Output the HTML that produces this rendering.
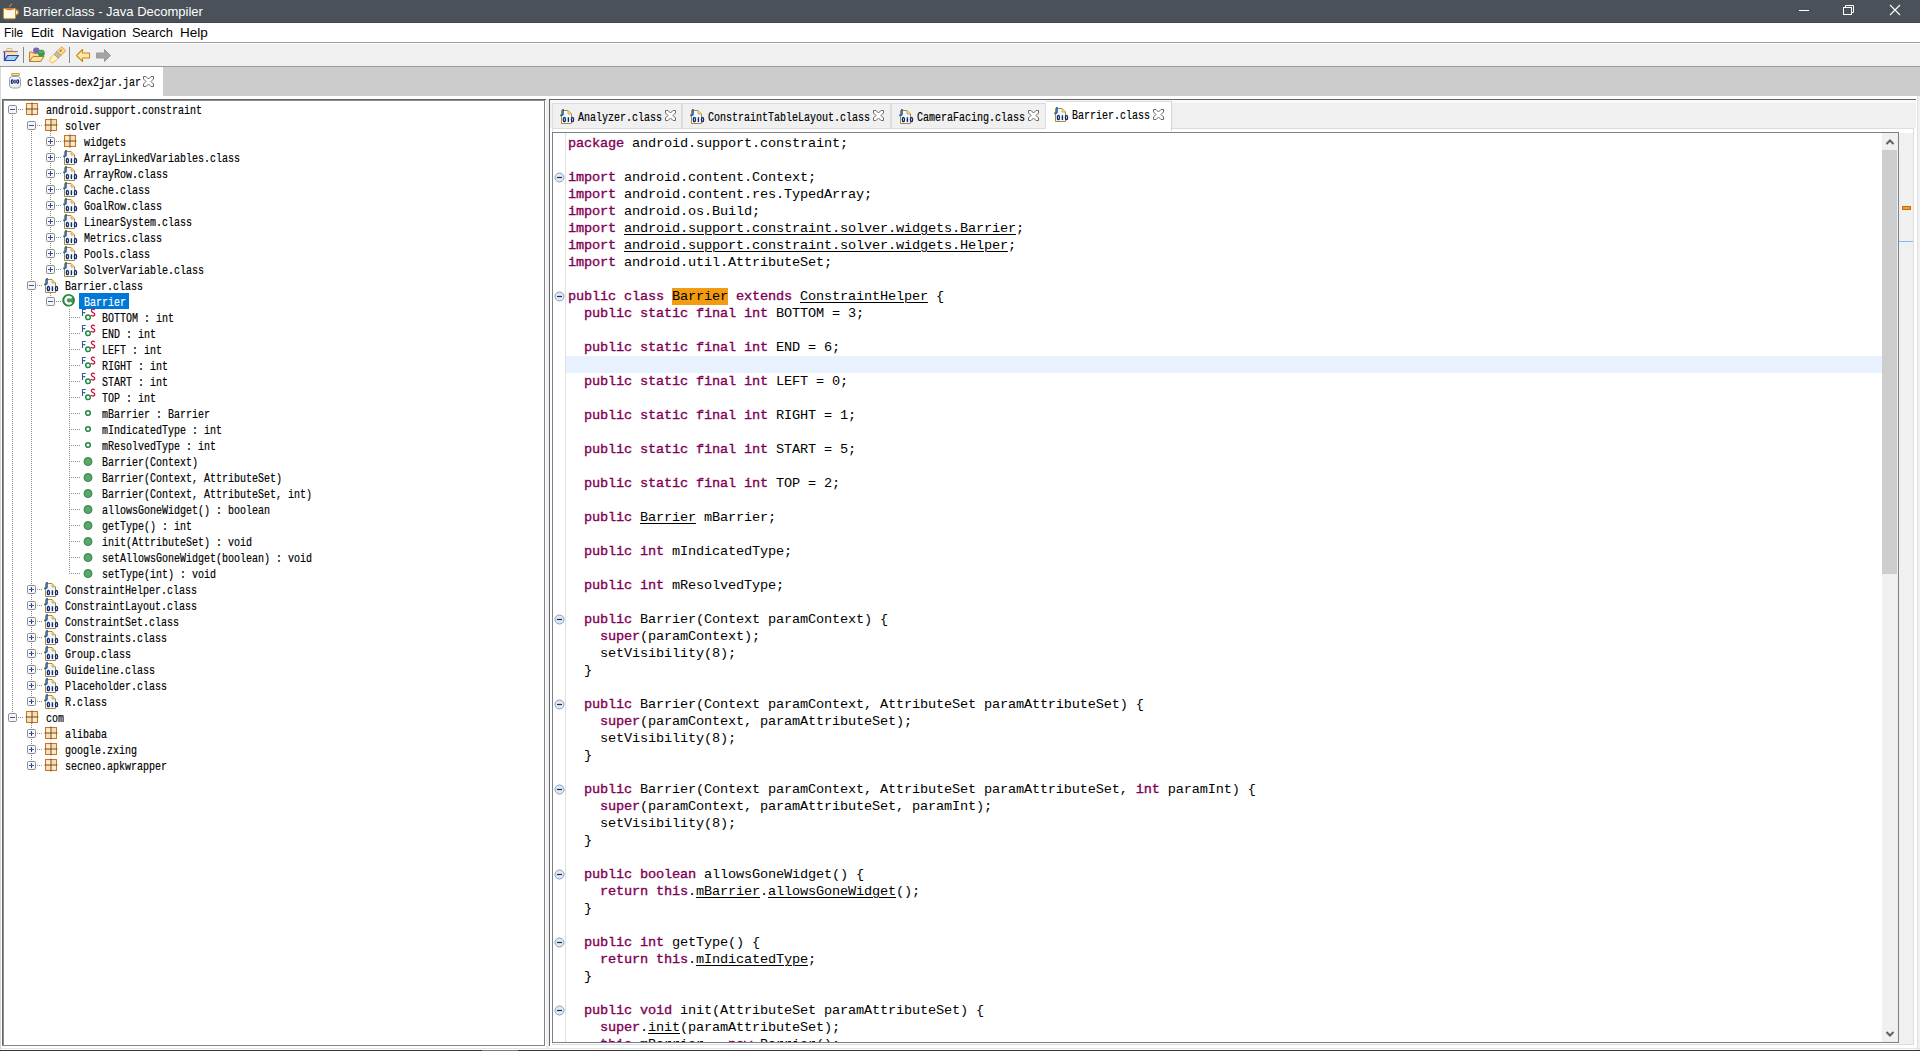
<!DOCTYPE html><html><head><meta charset="utf-8"><style>
html,body{margin:0;padding:0;}
body{width:1920px;height:1051px;overflow:hidden;background:#f0f0f0;position:relative;font-family:"Liberation Sans",sans-serif;}
.a{position:absolute;}
.tt{position:absolute;font-family:"Liberation Mono",monospace;font-size:10px;line-height:16px;white-space:pre;transform:scaleY(1.25);transform-origin:0 0;color:#000;-webkit-text-stroke:0.15px currentColor;}
.cd{position:absolute;left:568px;font-family:"Liberation Mono",monospace;font-size:13.6px;letter-spacing:-0.16px;line-height:17px;white-space:pre;color:#000;}
.k{color:#7f0055;-webkit-text-stroke:0.35px #7f0055;}
.u{text-decoration:underline;text-underline-offset:2px;text-decoration-thickness:1px;}
.hl{}
svg{position:absolute;overflow:visible;}
</style></head><body>
<div class="a" style="left:0;top:0;width:1920px;height:22px;background:#4a5158"></div>
<div class="a" style="left:0;top:22px;width:1920px;height:1px;background:#3f474e"></div>
<svg style="left:2px;top:2px" width="17" height="18" viewBox="0 0 17 18">
<path d="M10 1.8 Q8 3.5 7.5 5" stroke="#8a8a8a" stroke-width="1.3" fill="none"/>
<path d="M12.5 8 h1.6 a2 2.2 0 0 1 0 4.6 h-1.6" stroke="#d09030" stroke-width="1.3" fill="#fff4d8"/>
<path d="M1.5 6.5 L13.5 6.5 L13.5 15.5 Q13.5 16.8 12.2 16.8 L2.8 16.8 Q1.5 16.8 1.5 15.5 Z" fill="#fffbe6" stroke="#c88a2a" stroke-width="1"/>
<path d="M2.5 7 Q7.5 9.6 12.5 7 Z" fill="#f07030"/>
</svg>
<div class="a" style="left:23px;top:1px;height:22px;line-height:22px;font-size:13px;color:#fff">Barrier.class - Java Decompiler</div>
<svg style="left:0;top:0" width="1920" height="22"><line x1="1799" y1="10.5" x2="1809" y2="10.5" stroke="#fff" stroke-width="1"/><rect x="1843.5" y="7.5" width="8" height="7" fill="none" stroke="#fff" stroke-width="1"/><path d="M1845.5 7.5 V5.5 H1853.5 V12.5 H1851.5" fill="none" stroke="#fff" stroke-width="1"/><path d="M1890 5 L1900 15 M1900 5 L1890 15" stroke="#fff" stroke-width="1.1"/></svg>
<div class="a" style="left:0;top:23px;width:1920px;height:19px;background:#fff"></div>
<div class="a" style="left:0;top:43px;width:1920px;height:1px;background:#fcfcfc"></div>
<div class="a" style="left:4px;top:24px;line-height:18px;font-size:12.5px;color:#000;transform:scaleX(0.95);transform-origin:0 0">File</div>
<div class="a" style="left:31px;top:24px;line-height:18px;font-size:12.5px;color:#000;transform:scaleX(1.05);transform-origin:0 0">Edit</div>
<div class="a" style="left:62px;top:24px;line-height:18px;font-size:12.5px;color:#000;transform:scaleX(1.088);transform-origin:0 0">Navigation</div>
<div class="a" style="left:132px;top:24px;line-height:18px;font-size:12.5px;color:#000;transform:scaleX(1.03);transform-origin:0 0">Search</div>
<div class="a" style="left:180px;top:24px;line-height:18px;font-size:12.5px;color:#000;transform:scaleX(1.08);transform-origin:0 0">Help</div>
<div class="a" style="left:0;top:42px;width:1920px;height:1px;background:#a0a0a0"></div>
<div class="a" style="left:0;top:44px;width:1920px;height:22px;background:#f0f0f0"></div>
<div class="a" style="left:0;top:66px;width:1920px;height:1px;background:#999"></div>
<svg style="left:0px;top:43px" width="22" height="22" viewBox="0 0 22 22">
<rect x="6.5" y="5.5" width="5.5" height="2.5" rx="1" fill="#fff6dc" stroke="#d8b070" stroke-width="1"/>
<path d="M3.5 8.5 H17.5 V13 H4.5 Z" fill="#fde49a"/>
<path d="M3 8.5 H17.8" stroke="#8a7898" stroke-width="1.2"/>
<path d="M4.5 9 V17.5" stroke="#2848c0" stroke-width="1.3"/>
<path d="M7.5 12.5 H18.5 L14.8 17.5 H4.5 Z" fill="#a6d2f6" stroke="#2040c0" stroke-width="1.2" stroke-linejoin="round"/>
</svg>
<div class="a" style="left:23px;top:47px;width:1px;height:16px;background:#888"></div>
<svg style="left:28px;top:46px" width="18" height="17" viewBox="0 0 18 17">
<path d="M1.5 6 H4 L5 7 H13 V15.5 H1.5 Z" fill="#f9dc98" stroke="#c07a20" stroke-width="1"/>
<path d="M1.5 15.5 L5 10.5 H16 L12.5 15.5 Z" fill="#fbe3a0" stroke="#c07a20" stroke-width="1"/>
<circle cx="8.3" cy="4.6" r="3.2" fill="#7466b8"/>
<circle cx="13.4" cy="7.2" r="3.4" fill="#3a9a4a"/>
<path d="M11 6 H15.5" stroke="#8ac890" stroke-width="0.8"/>
</svg>
<svg style="left:48px;top:46px" width="18" height="18" viewBox="0 0 18 18">
<g transform="translate(8.8 9.6) rotate(-45) scale(0.88)">
<path d="M-10 -2.2 L-5 -3.2 H-1 V3.2 H-5 L-10 2.2 Z" fill="#fff4c0" stroke="#f0a830" stroke-width="0.9"/>
<path d="M-1 -3.2 H3.5 V3.2 H-1 Z" fill="#bdb8c4" stroke="#9a8a70" stroke-width="0.8"/>
<path d="M3.5 -3.2 H10 Q11.2 -3.2 11.2 -2 V2 Q11.2 3.2 10 3.2 H3.5 Z" fill="#fbd98a" stroke="#e8961c" stroke-width="1"/>
<circle cx="8" cy="-0.8" r="0.7" fill="#2a50a8"/><circle cx="6.5" cy="-0.8" r="0.7" fill="#2a50a8"/>
</g>
</svg>
<div class="a" style="left:69px;top:47px;width:1px;height:16px;background:#888"></div>
<svg style="left:75px;top:48px" width="17" height="15" viewBox="0 0 17 15">
<path d="M1.5 7.5 L7.5 1.5 V5 H14.5 V10 H7.5 V13.5 Z" fill="#fde9a8" stroke="#c88a10" stroke-width="1.1" stroke-linejoin="round"/>
</svg>
<svg style="left:95px;top:48px" width="17" height="15" viewBox="0 0 17 15">
<path d="M15.5 7.5 L9.5 1.5 V5 H1.5 V10 H9.5 V13.5 Z" fill="#a4a4a4" stroke="#999" stroke-width="1" stroke-linejoin="round"/>
</svg>
<div class="a" style="left:0;top:67px;width:1920px;height:29px;background:#cccccc"></div>
<div class="a" style="left:0;top:96px;width:1920px;height:954px;background:#fff"></div>
<div class="a" style="left:0;top:67px;width:1px;height:983px;background:#d9d9d9"></div>
<div class="a" style="left:1px;top:67px;width:162px;height:32px;background:#fff"></div>
<svg style="left:9px;top:73px" width="13" height="16" viewBox="0 0 13 16">
<rect x="2.5" y="0.5" width="8" height="2" rx="0.5" fill="#f6e4a0" stroke="#c8a040" stroke-width="1"/>
<rect x="0.5" y="3.5" width="11" height="11.5" rx="3" fill="#f4f7fc" stroke="#8aa2c8" stroke-width="1"/>
<rect x="2" y="12" width="8" height="2" fill="#fbeec0"/>
<ellipse cx="3.3" cy="8.6" rx="1" ry="1.8" fill="none" stroke="#13286a" stroke-width="1.2"/>
<path d="M6 6.8 V10.4" stroke="#13286a" stroke-width="1.3"/>
<ellipse cx="8.7" cy="8.6" rx="1" ry="1.8" fill="none" stroke="#13286a" stroke-width="1.2"/>
</svg>
<div class="tt" style="left:27px;top:73px">classes-dex2jar.jar</div>
<svg style="left:143px;top:76px" width="11" height="11" viewBox="0 0 11 11">
<path d="M0.5 0.5 H3 L5.5 3 L8 0.5 H10.5 V3 L8 5.5 L10.5 8 V10.5 H8 L5.5 8 L3 10.5 H0.5 V8 L3 5.5 L0.5 3 Z" fill="#fff" stroke="#6a6a5e" stroke-width="1" stroke-linejoin="round"/>
</svg>
<div class="a" style="left:2px;top:99px;width:543px;height:947px;background:#fff"></div>
<div class="a" style="left:2px;top:99px;width:544px;height:1px;background:#646464"></div>
<div class="a" style="left:2px;top:100px;width:542px;height:1px;background:#8a9199"></div>
<div class="a" style="left:2px;top:99px;width:1px;height:947px;background:#646464"></div>
<div class="a" style="left:3px;top:100px;width:1px;height:946px;background:#8a9199"></div>
<div class="a" style="left:544px;top:100px;width:1px;height:946px;background:#7a818a"></div>
<div class="a" style="left:2px;top:1045px;width:543px;height:1px;background:#80868e"></div>
<div class="a" style="left:12px;top:115px;width:1px;height:602px;background:repeating-linear-gradient(180deg,#8c8c8c 0 1px,transparent 1px 2px)"></div>
<div class="a" style="left:31px;top:131px;width:1px;height:571px;background:repeating-linear-gradient(180deg,#8c8c8c 0 1px,transparent 1px 2px)"></div>
<div class="a" style="left:31px;top:723px;width:1px;height:43px;background:repeating-linear-gradient(180deg,#8c8c8c 0 1px,transparent 1px 2px)"></div>
<div class="a" style="left:50px;top:131px;width:1px;height:139px;background:repeating-linear-gradient(180deg,#8c8c8c 0 1px,transparent 1px 2px)"></div>
<div class="a" style="left:50px;top:291px;width:1px;height:11px;background:repeating-linear-gradient(180deg,#8c8c8c 0 1px,transparent 1px 2px)"></div>
<div class="a" style="left:69px;top:309px;width:1px;height:265px;background:repeating-linear-gradient(180deg,#8c8c8c 0 1px,transparent 1px 2px)"></div>
<svg style="left:8px;top:105px" width="9" height="9" viewBox="0 0 9 9">
<rect x="0.5" y="0.5" width="8" height="8" rx="1.2" fill="#f6f6f6" stroke="#8e8e8e" stroke-width="1"/>
<path d="M2 4.5 H7" stroke="#3a56a8" stroke-width="1"/></svg>
<div class="a" style="left:18px;top:109px;width:6px;height:1px;background:repeating-linear-gradient(90deg,#8c8c8c 0 1px,transparent 1px 2px)"></div>
<svg style="left:25px;top:102px" width="14" height="14" viewBox="0 0 14 14">
<rect x="1.5" y="1.5" width="11" height="11" fill="#f7deb0" stroke="#c8742a" stroke-width="1"/>
<rect x="2.5" y="2.5" width="4" height="4" fill="#fcefc8"/><rect x="7.5" y="7.5" width="4" height="4" fill="#fcefc8"/>
<path d="M7 0.5 V13.5 M0.5 7 H13.5" stroke="#7a4a2a" stroke-width="1"/>
</svg>
<div class="tt" style="left:46px;top:101px">android.support.constraint</div>
<svg style="left:27px;top:121px" width="9" height="9" viewBox="0 0 9 9">
<rect x="0.5" y="0.5" width="8" height="8" rx="1.2" fill="#f6f6f6" stroke="#8e8e8e" stroke-width="1"/>
<path d="M2 4.5 H7" stroke="#3a56a8" stroke-width="1"/></svg>
<div class="a" style="left:37px;top:125px;width:6px;height:1px;background:repeating-linear-gradient(90deg,#8c8c8c 0 1px,transparent 1px 2px)"></div>
<svg style="left:44px;top:118px" width="14" height="14" viewBox="0 0 14 14">
<rect x="1.5" y="1.5" width="11" height="11" fill="#f7deb0" stroke="#c8742a" stroke-width="1"/>
<rect x="2.5" y="2.5" width="4" height="4" fill="#fcefc8"/><rect x="7.5" y="7.5" width="4" height="4" fill="#fcefc8"/>
<path d="M7 0.5 V13.5 M0.5 7 H13.5" stroke="#7a4a2a" stroke-width="1"/>
</svg>
<div class="tt" style="left:65px;top:117px">solver</div>
<svg style="left:46px;top:137px" width="9" height="9" viewBox="0 0 9 9">
<rect x="0.5" y="0.5" width="8" height="8" rx="1.2" fill="#f6f6f6" stroke="#8e8e8e" stroke-width="1"/>
<path d="M2 4.5 H7" stroke="#3a56a8" stroke-width="1"/><path d="M4.5 2 V7" stroke="#2a46a0" stroke-width="1"/></svg>
<div class="a" style="left:56px;top:141px;width:6px;height:1px;background:repeating-linear-gradient(90deg,#8c8c8c 0 1px,transparent 1px 2px)"></div>
<svg style="left:63px;top:134px" width="14" height="14" viewBox="0 0 14 14">
<rect x="1.5" y="1.5" width="11" height="11" fill="#f7deb0" stroke="#c8742a" stroke-width="1"/>
<rect x="2.5" y="2.5" width="4" height="4" fill="#fcefc8"/><rect x="7.5" y="7.5" width="4" height="4" fill="#fcefc8"/>
<path d="M7 0.5 V13.5 M0.5 7 H13.5" stroke="#7a4a2a" stroke-width="1"/>
</svg>
<div class="tt" style="left:84px;top:133px">widgets</div>
<svg style="left:46px;top:153px" width="9" height="9" viewBox="0 0 9 9">
<rect x="0.5" y="0.5" width="8" height="8" rx="1.2" fill="#f6f6f6" stroke="#8e8e8e" stroke-width="1"/>
<path d="M2 4.5 H7" stroke="#3a56a8" stroke-width="1"/><path d="M4.5 2 V7" stroke="#2a46a0" stroke-width="1"/></svg>
<div class="a" style="left:56px;top:157px;width:6px;height:1px;background:repeating-linear-gradient(90deg,#8c8c8c 0 1px,transparent 1px 2px)"></div>
<svg style="left:62px;top:149px" width="16" height="16" viewBox="0 0 16 16">
<path d="M2.5 2.5 H9 L12.5 6 V15.5 H2.5 Z" fill="#f2f6fd" stroke="#a8883a" stroke-width="1"/>
<path d="M9 2.5 V6 H12.5" fill="#f3d78a" stroke="#d0a040" stroke-width="0.8"/>
<path d="M4 1 V5.6 Q4 7.4 2.2 7.4 H1.2" fill="none" stroke="#2a64a8" stroke-width="1.7"/>
<ellipse cx="5.4" cy="11.6" rx="1.1" ry="2.1" fill="none" stroke="#13286a" stroke-width="1.3"/>
<path d="M9.4 9.3 V14" stroke="#13286a" stroke-width="1.4"/>
<ellipse cx="13.5" cy="11.6" rx="1.1" ry="2.1" fill="none" stroke="#13286a" stroke-width="1.3"/>
</svg>
<div class="tt" style="left:84px;top:149px">ArrayLinkedVariables.class</div>
<svg style="left:46px;top:169px" width="9" height="9" viewBox="0 0 9 9">
<rect x="0.5" y="0.5" width="8" height="8" rx="1.2" fill="#f6f6f6" stroke="#8e8e8e" stroke-width="1"/>
<path d="M2 4.5 H7" stroke="#3a56a8" stroke-width="1"/><path d="M4.5 2 V7" stroke="#2a46a0" stroke-width="1"/></svg>
<div class="a" style="left:56px;top:173px;width:6px;height:1px;background:repeating-linear-gradient(90deg,#8c8c8c 0 1px,transparent 1px 2px)"></div>
<svg style="left:62px;top:165px" width="16" height="16" viewBox="0 0 16 16">
<path d="M2.5 2.5 H9 L12.5 6 V15.5 H2.5 Z" fill="#f2f6fd" stroke="#a8883a" stroke-width="1"/>
<path d="M9 2.5 V6 H12.5" fill="#f3d78a" stroke="#d0a040" stroke-width="0.8"/>
<path d="M4 1 V5.6 Q4 7.4 2.2 7.4 H1.2" fill="none" stroke="#2a64a8" stroke-width="1.7"/>
<ellipse cx="5.4" cy="11.6" rx="1.1" ry="2.1" fill="none" stroke="#13286a" stroke-width="1.3"/>
<path d="M9.4 9.3 V14" stroke="#13286a" stroke-width="1.4"/>
<ellipse cx="13.5" cy="11.6" rx="1.1" ry="2.1" fill="none" stroke="#13286a" stroke-width="1.3"/>
</svg>
<div class="tt" style="left:84px;top:165px">ArrayRow.class</div>
<svg style="left:46px;top:185px" width="9" height="9" viewBox="0 0 9 9">
<rect x="0.5" y="0.5" width="8" height="8" rx="1.2" fill="#f6f6f6" stroke="#8e8e8e" stroke-width="1"/>
<path d="M2 4.5 H7" stroke="#3a56a8" stroke-width="1"/><path d="M4.5 2 V7" stroke="#2a46a0" stroke-width="1"/></svg>
<div class="a" style="left:56px;top:189px;width:6px;height:1px;background:repeating-linear-gradient(90deg,#8c8c8c 0 1px,transparent 1px 2px)"></div>
<svg style="left:62px;top:181px" width="16" height="16" viewBox="0 0 16 16">
<path d="M2.5 2.5 H9 L12.5 6 V15.5 H2.5 Z" fill="#f2f6fd" stroke="#a8883a" stroke-width="1"/>
<path d="M9 2.5 V6 H12.5" fill="#f3d78a" stroke="#d0a040" stroke-width="0.8"/>
<path d="M4 1 V5.6 Q4 7.4 2.2 7.4 H1.2" fill="none" stroke="#2a64a8" stroke-width="1.7"/>
<ellipse cx="5.4" cy="11.6" rx="1.1" ry="2.1" fill="none" stroke="#13286a" stroke-width="1.3"/>
<path d="M9.4 9.3 V14" stroke="#13286a" stroke-width="1.4"/>
<ellipse cx="13.5" cy="11.6" rx="1.1" ry="2.1" fill="none" stroke="#13286a" stroke-width="1.3"/>
</svg>
<div class="tt" style="left:84px;top:181px">Cache.class</div>
<svg style="left:46px;top:201px" width="9" height="9" viewBox="0 0 9 9">
<rect x="0.5" y="0.5" width="8" height="8" rx="1.2" fill="#f6f6f6" stroke="#8e8e8e" stroke-width="1"/>
<path d="M2 4.5 H7" stroke="#3a56a8" stroke-width="1"/><path d="M4.5 2 V7" stroke="#2a46a0" stroke-width="1"/></svg>
<div class="a" style="left:56px;top:205px;width:6px;height:1px;background:repeating-linear-gradient(90deg,#8c8c8c 0 1px,transparent 1px 2px)"></div>
<svg style="left:62px;top:197px" width="16" height="16" viewBox="0 0 16 16">
<path d="M2.5 2.5 H9 L12.5 6 V15.5 H2.5 Z" fill="#f2f6fd" stroke="#a8883a" stroke-width="1"/>
<path d="M9 2.5 V6 H12.5" fill="#f3d78a" stroke="#d0a040" stroke-width="0.8"/>
<path d="M4 1 V5.6 Q4 7.4 2.2 7.4 H1.2" fill="none" stroke="#2a64a8" stroke-width="1.7"/>
<ellipse cx="5.4" cy="11.6" rx="1.1" ry="2.1" fill="none" stroke="#13286a" stroke-width="1.3"/>
<path d="M9.4 9.3 V14" stroke="#13286a" stroke-width="1.4"/>
<ellipse cx="13.5" cy="11.6" rx="1.1" ry="2.1" fill="none" stroke="#13286a" stroke-width="1.3"/>
</svg>
<div class="tt" style="left:84px;top:197px">GoalRow.class</div>
<svg style="left:46px;top:217px" width="9" height="9" viewBox="0 0 9 9">
<rect x="0.5" y="0.5" width="8" height="8" rx="1.2" fill="#f6f6f6" stroke="#8e8e8e" stroke-width="1"/>
<path d="M2 4.5 H7" stroke="#3a56a8" stroke-width="1"/><path d="M4.5 2 V7" stroke="#2a46a0" stroke-width="1"/></svg>
<div class="a" style="left:56px;top:221px;width:6px;height:1px;background:repeating-linear-gradient(90deg,#8c8c8c 0 1px,transparent 1px 2px)"></div>
<svg style="left:62px;top:213px" width="16" height="16" viewBox="0 0 16 16">
<path d="M2.5 2.5 H9 L12.5 6 V15.5 H2.5 Z" fill="#f2f6fd" stroke="#a8883a" stroke-width="1"/>
<path d="M9 2.5 V6 H12.5" fill="#f3d78a" stroke="#d0a040" stroke-width="0.8"/>
<path d="M4 1 V5.6 Q4 7.4 2.2 7.4 H1.2" fill="none" stroke="#2a64a8" stroke-width="1.7"/>
<ellipse cx="5.4" cy="11.6" rx="1.1" ry="2.1" fill="none" stroke="#13286a" stroke-width="1.3"/>
<path d="M9.4 9.3 V14" stroke="#13286a" stroke-width="1.4"/>
<ellipse cx="13.5" cy="11.6" rx="1.1" ry="2.1" fill="none" stroke="#13286a" stroke-width="1.3"/>
</svg>
<div class="tt" style="left:84px;top:213px">LinearSystem.class</div>
<svg style="left:46px;top:233px" width="9" height="9" viewBox="0 0 9 9">
<rect x="0.5" y="0.5" width="8" height="8" rx="1.2" fill="#f6f6f6" stroke="#8e8e8e" stroke-width="1"/>
<path d="M2 4.5 H7" stroke="#3a56a8" stroke-width="1"/><path d="M4.5 2 V7" stroke="#2a46a0" stroke-width="1"/></svg>
<div class="a" style="left:56px;top:237px;width:6px;height:1px;background:repeating-linear-gradient(90deg,#8c8c8c 0 1px,transparent 1px 2px)"></div>
<svg style="left:62px;top:229px" width="16" height="16" viewBox="0 0 16 16">
<path d="M2.5 2.5 H9 L12.5 6 V15.5 H2.5 Z" fill="#f2f6fd" stroke="#a8883a" stroke-width="1"/>
<path d="M9 2.5 V6 H12.5" fill="#f3d78a" stroke="#d0a040" stroke-width="0.8"/>
<path d="M4 1 V5.6 Q4 7.4 2.2 7.4 H1.2" fill="none" stroke="#2a64a8" stroke-width="1.7"/>
<ellipse cx="5.4" cy="11.6" rx="1.1" ry="2.1" fill="none" stroke="#13286a" stroke-width="1.3"/>
<path d="M9.4 9.3 V14" stroke="#13286a" stroke-width="1.4"/>
<ellipse cx="13.5" cy="11.6" rx="1.1" ry="2.1" fill="none" stroke="#13286a" stroke-width="1.3"/>
</svg>
<div class="tt" style="left:84px;top:229px">Metrics.class</div>
<svg style="left:46px;top:249px" width="9" height="9" viewBox="0 0 9 9">
<rect x="0.5" y="0.5" width="8" height="8" rx="1.2" fill="#f6f6f6" stroke="#8e8e8e" stroke-width="1"/>
<path d="M2 4.5 H7" stroke="#3a56a8" stroke-width="1"/><path d="M4.5 2 V7" stroke="#2a46a0" stroke-width="1"/></svg>
<div class="a" style="left:56px;top:253px;width:6px;height:1px;background:repeating-linear-gradient(90deg,#8c8c8c 0 1px,transparent 1px 2px)"></div>
<svg style="left:62px;top:245px" width="16" height="16" viewBox="0 0 16 16">
<path d="M2.5 2.5 H9 L12.5 6 V15.5 H2.5 Z" fill="#f2f6fd" stroke="#a8883a" stroke-width="1"/>
<path d="M9 2.5 V6 H12.5" fill="#f3d78a" stroke="#d0a040" stroke-width="0.8"/>
<path d="M4 1 V5.6 Q4 7.4 2.2 7.4 H1.2" fill="none" stroke="#2a64a8" stroke-width="1.7"/>
<ellipse cx="5.4" cy="11.6" rx="1.1" ry="2.1" fill="none" stroke="#13286a" stroke-width="1.3"/>
<path d="M9.4 9.3 V14" stroke="#13286a" stroke-width="1.4"/>
<ellipse cx="13.5" cy="11.6" rx="1.1" ry="2.1" fill="none" stroke="#13286a" stroke-width="1.3"/>
</svg>
<div class="tt" style="left:84px;top:245px">Pools.class</div>
<svg style="left:46px;top:265px" width="9" height="9" viewBox="0 0 9 9">
<rect x="0.5" y="0.5" width="8" height="8" rx="1.2" fill="#f6f6f6" stroke="#8e8e8e" stroke-width="1"/>
<path d="M2 4.5 H7" stroke="#3a56a8" stroke-width="1"/><path d="M4.5 2 V7" stroke="#2a46a0" stroke-width="1"/></svg>
<div class="a" style="left:56px;top:269px;width:6px;height:1px;background:repeating-linear-gradient(90deg,#8c8c8c 0 1px,transparent 1px 2px)"></div>
<svg style="left:62px;top:261px" width="16" height="16" viewBox="0 0 16 16">
<path d="M2.5 2.5 H9 L12.5 6 V15.5 H2.5 Z" fill="#f2f6fd" stroke="#a8883a" stroke-width="1"/>
<path d="M9 2.5 V6 H12.5" fill="#f3d78a" stroke="#d0a040" stroke-width="0.8"/>
<path d="M4 1 V5.6 Q4 7.4 2.2 7.4 H1.2" fill="none" stroke="#2a64a8" stroke-width="1.7"/>
<ellipse cx="5.4" cy="11.6" rx="1.1" ry="2.1" fill="none" stroke="#13286a" stroke-width="1.3"/>
<path d="M9.4 9.3 V14" stroke="#13286a" stroke-width="1.4"/>
<ellipse cx="13.5" cy="11.6" rx="1.1" ry="2.1" fill="none" stroke="#13286a" stroke-width="1.3"/>
</svg>
<div class="tt" style="left:84px;top:261px">SolverVariable.class</div>
<svg style="left:27px;top:281px" width="9" height="9" viewBox="0 0 9 9">
<rect x="0.5" y="0.5" width="8" height="8" rx="1.2" fill="#f6f6f6" stroke="#8e8e8e" stroke-width="1"/>
<path d="M2 4.5 H7" stroke="#3a56a8" stroke-width="1"/></svg>
<div class="a" style="left:37px;top:285px;width:6px;height:1px;background:repeating-linear-gradient(90deg,#8c8c8c 0 1px,transparent 1px 2px)"></div>
<svg style="left:43px;top:277px" width="16" height="16" viewBox="0 0 16 16">
<path d="M2.5 2.5 H9 L12.5 6 V15.5 H2.5 Z" fill="#f2f6fd" stroke="#a8883a" stroke-width="1"/>
<path d="M9 2.5 V6 H12.5" fill="#f3d78a" stroke="#d0a040" stroke-width="0.8"/>
<path d="M4 1 V5.6 Q4 7.4 2.2 7.4 H1.2" fill="none" stroke="#2a64a8" stroke-width="1.7"/>
<ellipse cx="5.4" cy="11.6" rx="1.1" ry="2.1" fill="none" stroke="#13286a" stroke-width="1.3"/>
<path d="M9.4 9.3 V14" stroke="#13286a" stroke-width="1.4"/>
<ellipse cx="13.5" cy="11.6" rx="1.1" ry="2.1" fill="none" stroke="#13286a" stroke-width="1.3"/>
</svg>
<div class="tt" style="left:65px;top:277px">Barrier.class</div>
<svg style="left:46px;top:297px" width="9" height="9" viewBox="0 0 9 9">
<rect x="0.5" y="0.5" width="8" height="8" rx="1.2" fill="#f6f6f6" stroke="#8e8e8e" stroke-width="1"/>
<path d="M2 4.5 H7" stroke="#3a56a8" stroke-width="1"/></svg>
<div class="a" style="left:56px;top:301px;width:6px;height:1px;background:repeating-linear-gradient(90deg,#8c8c8c 0 1px,transparent 1px 2px)"></div>
<svg style="left:62px;top:293px" width="14" height="14" viewBox="0 0 14 14"><circle cx="6.6" cy="7.3" r="6.3" fill="#2a8040"/><circle cx="6.6" cy="7.3" r="4.8" fill="#3f9a52"/><path d="M9.4 5.2 A3.3 3.3 0 1 0 9.4 9.4" stroke="#fff" stroke-width="2.4" fill="none"/></svg>
<div class="a" style="left:79px;top:293px;width:50px;height:16px;background:#0078d7"></div>
<div class="tt" style="left:84px;top:293px;color:#fff">Barrier</div>
<div class="a" style="left:71px;top:317px;width:9px;height:1px;background:repeating-linear-gradient(90deg,#8c8c8c 0 1px,transparent 1px 2px)"></div>
<svg style="left:81px;top:308px" width="16" height="14" viewBox="0 0 16 14"><path d="M1.5 8 V1.5 H4.8 M1.5 4.6 H4.2" stroke="#2a5aa8" stroke-width="1.1" fill="none"/><circle cx="7" cy="9.3" r="2.3" fill="none" stroke="#1e8a3a" stroke-width="1.5"/><path d="M13.6 2.2 Q13 1.2 12 1.2 Q10.4 1.2 10.4 2.7 Q10.4 4 12 4.6 Q13.8 5.2 13.8 6.6 Q13.8 8 12 8 Q10.8 8 10.2 7" fill="none" stroke="#d0103a" stroke-width="1.3"/></svg>
<div class="tt" style="left:102px;top:309px">BOTTOM : int</div>
<div class="a" style="left:71px;top:333px;width:9px;height:1px;background:repeating-linear-gradient(90deg,#8c8c8c 0 1px,transparent 1px 2px)"></div>
<svg style="left:81px;top:324px" width="16" height="14" viewBox="0 0 16 14"><path d="M1.5 8 V1.5 H4.8 M1.5 4.6 H4.2" stroke="#2a5aa8" stroke-width="1.1" fill="none"/><circle cx="7" cy="9.3" r="2.3" fill="none" stroke="#1e8a3a" stroke-width="1.5"/><path d="M13.6 2.2 Q13 1.2 12 1.2 Q10.4 1.2 10.4 2.7 Q10.4 4 12 4.6 Q13.8 5.2 13.8 6.6 Q13.8 8 12 8 Q10.8 8 10.2 7" fill="none" stroke="#d0103a" stroke-width="1.3"/></svg>
<div class="tt" style="left:102px;top:325px">END : int</div>
<div class="a" style="left:71px;top:349px;width:9px;height:1px;background:repeating-linear-gradient(90deg,#8c8c8c 0 1px,transparent 1px 2px)"></div>
<svg style="left:81px;top:340px" width="16" height="14" viewBox="0 0 16 14"><path d="M1.5 8 V1.5 H4.8 M1.5 4.6 H4.2" stroke="#2a5aa8" stroke-width="1.1" fill="none"/><circle cx="7" cy="9.3" r="2.3" fill="none" stroke="#1e8a3a" stroke-width="1.5"/><path d="M13.6 2.2 Q13 1.2 12 1.2 Q10.4 1.2 10.4 2.7 Q10.4 4 12 4.6 Q13.8 5.2 13.8 6.6 Q13.8 8 12 8 Q10.8 8 10.2 7" fill="none" stroke="#d0103a" stroke-width="1.3"/></svg>
<div class="tt" style="left:102px;top:341px">LEFT : int</div>
<div class="a" style="left:71px;top:365px;width:9px;height:1px;background:repeating-linear-gradient(90deg,#8c8c8c 0 1px,transparent 1px 2px)"></div>
<svg style="left:81px;top:356px" width="16" height="14" viewBox="0 0 16 14"><path d="M1.5 8 V1.5 H4.8 M1.5 4.6 H4.2" stroke="#2a5aa8" stroke-width="1.1" fill="none"/><circle cx="7" cy="9.3" r="2.3" fill="none" stroke="#1e8a3a" stroke-width="1.5"/><path d="M13.6 2.2 Q13 1.2 12 1.2 Q10.4 1.2 10.4 2.7 Q10.4 4 12 4.6 Q13.8 5.2 13.8 6.6 Q13.8 8 12 8 Q10.8 8 10.2 7" fill="none" stroke="#d0103a" stroke-width="1.3"/></svg>
<div class="tt" style="left:102px;top:357px">RIGHT : int</div>
<div class="a" style="left:71px;top:381px;width:9px;height:1px;background:repeating-linear-gradient(90deg,#8c8c8c 0 1px,transparent 1px 2px)"></div>
<svg style="left:81px;top:372px" width="16" height="14" viewBox="0 0 16 14"><path d="M1.5 8 V1.5 H4.8 M1.5 4.6 H4.2" stroke="#2a5aa8" stroke-width="1.1" fill="none"/><circle cx="7" cy="9.3" r="2.3" fill="none" stroke="#1e8a3a" stroke-width="1.5"/><path d="M13.6 2.2 Q13 1.2 12 1.2 Q10.4 1.2 10.4 2.7 Q10.4 4 12 4.6 Q13.8 5.2 13.8 6.6 Q13.8 8 12 8 Q10.8 8 10.2 7" fill="none" stroke="#d0103a" stroke-width="1.3"/></svg>
<div class="tt" style="left:102px;top:373px">START : int</div>
<div class="a" style="left:71px;top:397px;width:9px;height:1px;background:repeating-linear-gradient(90deg,#8c8c8c 0 1px,transparent 1px 2px)"></div>
<svg style="left:81px;top:388px" width="16" height="14" viewBox="0 0 16 14"><path d="M1.5 8 V1.5 H4.8 M1.5 4.6 H4.2" stroke="#2a5aa8" stroke-width="1.1" fill="none"/><circle cx="7" cy="9.3" r="2.3" fill="none" stroke="#1e8a3a" stroke-width="1.5"/><path d="M13.6 2.2 Q13 1.2 12 1.2 Q10.4 1.2 10.4 2.7 Q10.4 4 12 4.6 Q13.8 5.2 13.8 6.6 Q13.8 8 12 8 Q10.8 8 10.2 7" fill="none" stroke="#d0103a" stroke-width="1.3"/></svg>
<div class="tt" style="left:102px;top:389px">TOP : int</div>
<div class="a" style="left:71px;top:413px;width:9px;height:1px;background:repeating-linear-gradient(90deg,#8c8c8c 0 1px,transparent 1px 2px)"></div>
<svg style="left:81px;top:404px" width="16" height="14" viewBox="0 0 16 14"><circle cx="7" cy="9" r="2.3" fill="none" stroke="#1e8a3a" stroke-width="1.5"/></svg>
<div class="tt" style="left:102px;top:405px">mBarrier : Barrier</div>
<div class="a" style="left:71px;top:429px;width:9px;height:1px;background:repeating-linear-gradient(90deg,#8c8c8c 0 1px,transparent 1px 2px)"></div>
<svg style="left:81px;top:420px" width="16" height="14" viewBox="0 0 16 14"><circle cx="7" cy="9" r="2.3" fill="none" stroke="#1e8a3a" stroke-width="1.5"/></svg>
<div class="tt" style="left:102px;top:421px">mIndicatedType : int</div>
<div class="a" style="left:71px;top:445px;width:9px;height:1px;background:repeating-linear-gradient(90deg,#8c8c8c 0 1px,transparent 1px 2px)"></div>
<svg style="left:81px;top:436px" width="16" height="14" viewBox="0 0 16 14"><circle cx="7" cy="9" r="2.3" fill="none" stroke="#1e8a3a" stroke-width="1.5"/></svg>
<div class="tt" style="left:102px;top:437px">mResolvedType : int</div>
<div class="a" style="left:71px;top:461px;width:9px;height:1px;background:repeating-linear-gradient(90deg,#8c8c8c 0 1px,transparent 1px 2px)"></div>
<svg style="left:81px;top:452px" width="16" height="14" viewBox="0 0 16 14"><circle cx="7" cy="9.5" r="4" fill="#5aa868" stroke="#2a8040" stroke-width="1"/></svg>
<div class="tt" style="left:102px;top:453px">Barrier(Context)</div>
<div class="a" style="left:71px;top:477px;width:9px;height:1px;background:repeating-linear-gradient(90deg,#8c8c8c 0 1px,transparent 1px 2px)"></div>
<svg style="left:81px;top:468px" width="16" height="14" viewBox="0 0 16 14"><circle cx="7" cy="9.5" r="4" fill="#5aa868" stroke="#2a8040" stroke-width="1"/></svg>
<div class="tt" style="left:102px;top:469px">Barrier(Context, AttributeSet)</div>
<div class="a" style="left:71px;top:493px;width:9px;height:1px;background:repeating-linear-gradient(90deg,#8c8c8c 0 1px,transparent 1px 2px)"></div>
<svg style="left:81px;top:484px" width="16" height="14" viewBox="0 0 16 14"><circle cx="7" cy="9.5" r="4" fill="#5aa868" stroke="#2a8040" stroke-width="1"/></svg>
<div class="tt" style="left:102px;top:485px">Barrier(Context, AttributeSet, int)</div>
<div class="a" style="left:71px;top:509px;width:9px;height:1px;background:repeating-linear-gradient(90deg,#8c8c8c 0 1px,transparent 1px 2px)"></div>
<svg style="left:81px;top:500px" width="16" height="14" viewBox="0 0 16 14"><circle cx="7" cy="9.5" r="4" fill="#5aa868" stroke="#2a8040" stroke-width="1"/></svg>
<div class="tt" style="left:102px;top:501px">allowsGoneWidget() : boolean</div>
<div class="a" style="left:71px;top:525px;width:9px;height:1px;background:repeating-linear-gradient(90deg,#8c8c8c 0 1px,transparent 1px 2px)"></div>
<svg style="left:81px;top:516px" width="16" height="14" viewBox="0 0 16 14"><circle cx="7" cy="9.5" r="4" fill="#5aa868" stroke="#2a8040" stroke-width="1"/></svg>
<div class="tt" style="left:102px;top:517px">getType() : int</div>
<div class="a" style="left:71px;top:541px;width:9px;height:1px;background:repeating-linear-gradient(90deg,#8c8c8c 0 1px,transparent 1px 2px)"></div>
<svg style="left:81px;top:532px" width="16" height="14" viewBox="0 0 16 14"><circle cx="7" cy="9.5" r="4" fill="#5aa868" stroke="#2a8040" stroke-width="1"/></svg>
<div class="tt" style="left:102px;top:533px">init(AttributeSet) : void</div>
<div class="a" style="left:71px;top:557px;width:9px;height:1px;background:repeating-linear-gradient(90deg,#8c8c8c 0 1px,transparent 1px 2px)"></div>
<svg style="left:81px;top:548px" width="16" height="14" viewBox="0 0 16 14"><circle cx="7" cy="9.5" r="4" fill="#5aa868" stroke="#2a8040" stroke-width="1"/></svg>
<div class="tt" style="left:102px;top:549px">setAllowsGoneWidget(boolean) : void</div>
<div class="a" style="left:71px;top:573px;width:9px;height:1px;background:repeating-linear-gradient(90deg,#8c8c8c 0 1px,transparent 1px 2px)"></div>
<svg style="left:81px;top:564px" width="16" height="14" viewBox="0 0 16 14"><circle cx="7" cy="9.5" r="4" fill="#5aa868" stroke="#2a8040" stroke-width="1"/></svg>
<div class="tt" style="left:102px;top:565px">setType(int) : void</div>
<svg style="left:27px;top:585px" width="9" height="9" viewBox="0 0 9 9">
<rect x="0.5" y="0.5" width="8" height="8" rx="1.2" fill="#f6f6f6" stroke="#8e8e8e" stroke-width="1"/>
<path d="M2 4.5 H7" stroke="#3a56a8" stroke-width="1"/><path d="M4.5 2 V7" stroke="#2a46a0" stroke-width="1"/></svg>
<div class="a" style="left:37px;top:589px;width:6px;height:1px;background:repeating-linear-gradient(90deg,#8c8c8c 0 1px,transparent 1px 2px)"></div>
<svg style="left:43px;top:581px" width="16" height="16" viewBox="0 0 16 16">
<path d="M2.5 2.5 H9 L12.5 6 V15.5 H2.5 Z" fill="#f2f6fd" stroke="#a8883a" stroke-width="1"/>
<path d="M9 2.5 V6 H12.5" fill="#f3d78a" stroke="#d0a040" stroke-width="0.8"/>
<path d="M4 1 V5.6 Q4 7.4 2.2 7.4 H1.2" fill="none" stroke="#2a64a8" stroke-width="1.7"/>
<ellipse cx="5.4" cy="11.6" rx="1.1" ry="2.1" fill="none" stroke="#13286a" stroke-width="1.3"/>
<path d="M9.4 9.3 V14" stroke="#13286a" stroke-width="1.4"/>
<ellipse cx="13.5" cy="11.6" rx="1.1" ry="2.1" fill="none" stroke="#13286a" stroke-width="1.3"/>
</svg>
<div class="tt" style="left:65px;top:581px">ConstraintHelper.class</div>
<svg style="left:27px;top:601px" width="9" height="9" viewBox="0 0 9 9">
<rect x="0.5" y="0.5" width="8" height="8" rx="1.2" fill="#f6f6f6" stroke="#8e8e8e" stroke-width="1"/>
<path d="M2 4.5 H7" stroke="#3a56a8" stroke-width="1"/><path d="M4.5 2 V7" stroke="#2a46a0" stroke-width="1"/></svg>
<div class="a" style="left:37px;top:605px;width:6px;height:1px;background:repeating-linear-gradient(90deg,#8c8c8c 0 1px,transparent 1px 2px)"></div>
<svg style="left:43px;top:597px" width="16" height="16" viewBox="0 0 16 16">
<path d="M2.5 2.5 H9 L12.5 6 V15.5 H2.5 Z" fill="#f2f6fd" stroke="#a8883a" stroke-width="1"/>
<path d="M9 2.5 V6 H12.5" fill="#f3d78a" stroke="#d0a040" stroke-width="0.8"/>
<path d="M4 1 V5.6 Q4 7.4 2.2 7.4 H1.2" fill="none" stroke="#2a64a8" stroke-width="1.7"/>
<ellipse cx="5.4" cy="11.6" rx="1.1" ry="2.1" fill="none" stroke="#13286a" stroke-width="1.3"/>
<path d="M9.4 9.3 V14" stroke="#13286a" stroke-width="1.4"/>
<ellipse cx="13.5" cy="11.6" rx="1.1" ry="2.1" fill="none" stroke="#13286a" stroke-width="1.3"/>
</svg>
<div class="tt" style="left:65px;top:597px">ConstraintLayout.class</div>
<svg style="left:27px;top:617px" width="9" height="9" viewBox="0 0 9 9">
<rect x="0.5" y="0.5" width="8" height="8" rx="1.2" fill="#f6f6f6" stroke="#8e8e8e" stroke-width="1"/>
<path d="M2 4.5 H7" stroke="#3a56a8" stroke-width="1"/><path d="M4.5 2 V7" stroke="#2a46a0" stroke-width="1"/></svg>
<div class="a" style="left:37px;top:621px;width:6px;height:1px;background:repeating-linear-gradient(90deg,#8c8c8c 0 1px,transparent 1px 2px)"></div>
<svg style="left:43px;top:613px" width="16" height="16" viewBox="0 0 16 16">
<path d="M2.5 2.5 H9 L12.5 6 V15.5 H2.5 Z" fill="#f2f6fd" stroke="#a8883a" stroke-width="1"/>
<path d="M9 2.5 V6 H12.5" fill="#f3d78a" stroke="#d0a040" stroke-width="0.8"/>
<path d="M4 1 V5.6 Q4 7.4 2.2 7.4 H1.2" fill="none" stroke="#2a64a8" stroke-width="1.7"/>
<ellipse cx="5.4" cy="11.6" rx="1.1" ry="2.1" fill="none" stroke="#13286a" stroke-width="1.3"/>
<path d="M9.4 9.3 V14" stroke="#13286a" stroke-width="1.4"/>
<ellipse cx="13.5" cy="11.6" rx="1.1" ry="2.1" fill="none" stroke="#13286a" stroke-width="1.3"/>
</svg>
<div class="tt" style="left:65px;top:613px">ConstraintSet.class</div>
<svg style="left:27px;top:633px" width="9" height="9" viewBox="0 0 9 9">
<rect x="0.5" y="0.5" width="8" height="8" rx="1.2" fill="#f6f6f6" stroke="#8e8e8e" stroke-width="1"/>
<path d="M2 4.5 H7" stroke="#3a56a8" stroke-width="1"/><path d="M4.5 2 V7" stroke="#2a46a0" stroke-width="1"/></svg>
<div class="a" style="left:37px;top:637px;width:6px;height:1px;background:repeating-linear-gradient(90deg,#8c8c8c 0 1px,transparent 1px 2px)"></div>
<svg style="left:43px;top:629px" width="16" height="16" viewBox="0 0 16 16">
<path d="M2.5 2.5 H9 L12.5 6 V15.5 H2.5 Z" fill="#f2f6fd" stroke="#a8883a" stroke-width="1"/>
<path d="M9 2.5 V6 H12.5" fill="#f3d78a" stroke="#d0a040" stroke-width="0.8"/>
<path d="M4 1 V5.6 Q4 7.4 2.2 7.4 H1.2" fill="none" stroke="#2a64a8" stroke-width="1.7"/>
<ellipse cx="5.4" cy="11.6" rx="1.1" ry="2.1" fill="none" stroke="#13286a" stroke-width="1.3"/>
<path d="M9.4 9.3 V14" stroke="#13286a" stroke-width="1.4"/>
<ellipse cx="13.5" cy="11.6" rx="1.1" ry="2.1" fill="none" stroke="#13286a" stroke-width="1.3"/>
</svg>
<div class="tt" style="left:65px;top:629px">Constraints.class</div>
<svg style="left:27px;top:649px" width="9" height="9" viewBox="0 0 9 9">
<rect x="0.5" y="0.5" width="8" height="8" rx="1.2" fill="#f6f6f6" stroke="#8e8e8e" stroke-width="1"/>
<path d="M2 4.5 H7" stroke="#3a56a8" stroke-width="1"/><path d="M4.5 2 V7" stroke="#2a46a0" stroke-width="1"/></svg>
<div class="a" style="left:37px;top:653px;width:6px;height:1px;background:repeating-linear-gradient(90deg,#8c8c8c 0 1px,transparent 1px 2px)"></div>
<svg style="left:43px;top:645px" width="16" height="16" viewBox="0 0 16 16">
<path d="M2.5 2.5 H9 L12.5 6 V15.5 H2.5 Z" fill="#f2f6fd" stroke="#a8883a" stroke-width="1"/>
<path d="M9 2.5 V6 H12.5" fill="#f3d78a" stroke="#d0a040" stroke-width="0.8"/>
<path d="M4 1 V5.6 Q4 7.4 2.2 7.4 H1.2" fill="none" stroke="#2a64a8" stroke-width="1.7"/>
<ellipse cx="5.4" cy="11.6" rx="1.1" ry="2.1" fill="none" stroke="#13286a" stroke-width="1.3"/>
<path d="M9.4 9.3 V14" stroke="#13286a" stroke-width="1.4"/>
<ellipse cx="13.5" cy="11.6" rx="1.1" ry="2.1" fill="none" stroke="#13286a" stroke-width="1.3"/>
</svg>
<div class="tt" style="left:65px;top:645px">Group.class</div>
<svg style="left:27px;top:665px" width="9" height="9" viewBox="0 0 9 9">
<rect x="0.5" y="0.5" width="8" height="8" rx="1.2" fill="#f6f6f6" stroke="#8e8e8e" stroke-width="1"/>
<path d="M2 4.5 H7" stroke="#3a56a8" stroke-width="1"/><path d="M4.5 2 V7" stroke="#2a46a0" stroke-width="1"/></svg>
<div class="a" style="left:37px;top:669px;width:6px;height:1px;background:repeating-linear-gradient(90deg,#8c8c8c 0 1px,transparent 1px 2px)"></div>
<svg style="left:43px;top:661px" width="16" height="16" viewBox="0 0 16 16">
<path d="M2.5 2.5 H9 L12.5 6 V15.5 H2.5 Z" fill="#f2f6fd" stroke="#a8883a" stroke-width="1"/>
<path d="M9 2.5 V6 H12.5" fill="#f3d78a" stroke="#d0a040" stroke-width="0.8"/>
<path d="M4 1 V5.6 Q4 7.4 2.2 7.4 H1.2" fill="none" stroke="#2a64a8" stroke-width="1.7"/>
<ellipse cx="5.4" cy="11.6" rx="1.1" ry="2.1" fill="none" stroke="#13286a" stroke-width="1.3"/>
<path d="M9.4 9.3 V14" stroke="#13286a" stroke-width="1.4"/>
<ellipse cx="13.5" cy="11.6" rx="1.1" ry="2.1" fill="none" stroke="#13286a" stroke-width="1.3"/>
</svg>
<div class="tt" style="left:65px;top:661px">Guideline.class</div>
<svg style="left:27px;top:681px" width="9" height="9" viewBox="0 0 9 9">
<rect x="0.5" y="0.5" width="8" height="8" rx="1.2" fill="#f6f6f6" stroke="#8e8e8e" stroke-width="1"/>
<path d="M2 4.5 H7" stroke="#3a56a8" stroke-width="1"/><path d="M4.5 2 V7" stroke="#2a46a0" stroke-width="1"/></svg>
<div class="a" style="left:37px;top:685px;width:6px;height:1px;background:repeating-linear-gradient(90deg,#8c8c8c 0 1px,transparent 1px 2px)"></div>
<svg style="left:43px;top:677px" width="16" height="16" viewBox="0 0 16 16">
<path d="M2.5 2.5 H9 L12.5 6 V15.5 H2.5 Z" fill="#f2f6fd" stroke="#a8883a" stroke-width="1"/>
<path d="M9 2.5 V6 H12.5" fill="#f3d78a" stroke="#d0a040" stroke-width="0.8"/>
<path d="M4 1 V5.6 Q4 7.4 2.2 7.4 H1.2" fill="none" stroke="#2a64a8" stroke-width="1.7"/>
<ellipse cx="5.4" cy="11.6" rx="1.1" ry="2.1" fill="none" stroke="#13286a" stroke-width="1.3"/>
<path d="M9.4 9.3 V14" stroke="#13286a" stroke-width="1.4"/>
<ellipse cx="13.5" cy="11.6" rx="1.1" ry="2.1" fill="none" stroke="#13286a" stroke-width="1.3"/>
</svg>
<div class="tt" style="left:65px;top:677px">Placeholder.class</div>
<svg style="left:27px;top:697px" width="9" height="9" viewBox="0 0 9 9">
<rect x="0.5" y="0.5" width="8" height="8" rx="1.2" fill="#f6f6f6" stroke="#8e8e8e" stroke-width="1"/>
<path d="M2 4.5 H7" stroke="#3a56a8" stroke-width="1"/><path d="M4.5 2 V7" stroke="#2a46a0" stroke-width="1"/></svg>
<div class="a" style="left:37px;top:701px;width:6px;height:1px;background:repeating-linear-gradient(90deg,#8c8c8c 0 1px,transparent 1px 2px)"></div>
<svg style="left:43px;top:693px" width="16" height="16" viewBox="0 0 16 16">
<path d="M2.5 2.5 H9 L12.5 6 V15.5 H2.5 Z" fill="#f2f6fd" stroke="#a8883a" stroke-width="1"/>
<path d="M9 2.5 V6 H12.5" fill="#f3d78a" stroke="#d0a040" stroke-width="0.8"/>
<path d="M4 1 V5.6 Q4 7.4 2.2 7.4 H1.2" fill="none" stroke="#2a64a8" stroke-width="1.7"/>
<ellipse cx="5.4" cy="11.6" rx="1.1" ry="2.1" fill="none" stroke="#13286a" stroke-width="1.3"/>
<path d="M9.4 9.3 V14" stroke="#13286a" stroke-width="1.4"/>
<ellipse cx="13.5" cy="11.6" rx="1.1" ry="2.1" fill="none" stroke="#13286a" stroke-width="1.3"/>
</svg>
<div class="tt" style="left:65px;top:693px">R.class</div>
<svg style="left:8px;top:713px" width="9" height="9" viewBox="0 0 9 9">
<rect x="0.5" y="0.5" width="8" height="8" rx="1.2" fill="#f6f6f6" stroke="#8e8e8e" stroke-width="1"/>
<path d="M2 4.5 H7" stroke="#3a56a8" stroke-width="1"/></svg>
<div class="a" style="left:18px;top:717px;width:6px;height:1px;background:repeating-linear-gradient(90deg,#8c8c8c 0 1px,transparent 1px 2px)"></div>
<svg style="left:25px;top:710px" width="14" height="14" viewBox="0 0 14 14">
<rect x="1.5" y="1.5" width="11" height="11" fill="#f7deb0" stroke="#c8742a" stroke-width="1"/>
<rect x="2.5" y="2.5" width="4" height="4" fill="#fcefc8"/><rect x="7.5" y="7.5" width="4" height="4" fill="#fcefc8"/>
<path d="M7 0.5 V13.5 M0.5 7 H13.5" stroke="#7a4a2a" stroke-width="1"/>
</svg>
<div class="tt" style="left:46px;top:709px">com</div>
<svg style="left:27px;top:729px" width="9" height="9" viewBox="0 0 9 9">
<rect x="0.5" y="0.5" width="8" height="8" rx="1.2" fill="#f6f6f6" stroke="#8e8e8e" stroke-width="1"/>
<path d="M2 4.5 H7" stroke="#3a56a8" stroke-width="1"/><path d="M4.5 2 V7" stroke="#2a46a0" stroke-width="1"/></svg>
<div class="a" style="left:37px;top:733px;width:6px;height:1px;background:repeating-linear-gradient(90deg,#8c8c8c 0 1px,transparent 1px 2px)"></div>
<svg style="left:44px;top:726px" width="14" height="14" viewBox="0 0 14 14">
<rect x="1.5" y="1.5" width="11" height="11" fill="#f7deb0" stroke="#c8742a" stroke-width="1"/>
<rect x="2.5" y="2.5" width="4" height="4" fill="#fcefc8"/><rect x="7.5" y="7.5" width="4" height="4" fill="#fcefc8"/>
<path d="M7 0.5 V13.5 M0.5 7 H13.5" stroke="#7a4a2a" stroke-width="1"/>
</svg>
<div class="tt" style="left:65px;top:725px">alibaba</div>
<svg style="left:27px;top:745px" width="9" height="9" viewBox="0 0 9 9">
<rect x="0.5" y="0.5" width="8" height="8" rx="1.2" fill="#f6f6f6" stroke="#8e8e8e" stroke-width="1"/>
<path d="M2 4.5 H7" stroke="#3a56a8" stroke-width="1"/><path d="M4.5 2 V7" stroke="#2a46a0" stroke-width="1"/></svg>
<div class="a" style="left:37px;top:749px;width:6px;height:1px;background:repeating-linear-gradient(90deg,#8c8c8c 0 1px,transparent 1px 2px)"></div>
<svg style="left:44px;top:742px" width="14" height="14" viewBox="0 0 14 14">
<rect x="1.5" y="1.5" width="11" height="11" fill="#f7deb0" stroke="#c8742a" stroke-width="1"/>
<rect x="2.5" y="2.5" width="4" height="4" fill="#fcefc8"/><rect x="7.5" y="7.5" width="4" height="4" fill="#fcefc8"/>
<path d="M7 0.5 V13.5 M0.5 7 H13.5" stroke="#7a4a2a" stroke-width="1"/>
</svg>
<div class="tt" style="left:65px;top:741px">google.zxing</div>
<svg style="left:27px;top:761px" width="9" height="9" viewBox="0 0 9 9">
<rect x="0.5" y="0.5" width="8" height="8" rx="1.2" fill="#f6f6f6" stroke="#8e8e8e" stroke-width="1"/>
<path d="M2 4.5 H7" stroke="#3a56a8" stroke-width="1"/><path d="M4.5 2 V7" stroke="#2a46a0" stroke-width="1"/></svg>
<div class="a" style="left:37px;top:765px;width:6px;height:1px;background:repeating-linear-gradient(90deg,#8c8c8c 0 1px,transparent 1px 2px)"></div>
<svg style="left:44px;top:758px" width="14" height="14" viewBox="0 0 14 14">
<rect x="1.5" y="1.5" width="11" height="11" fill="#f7deb0" stroke="#c8742a" stroke-width="1"/>
<rect x="2.5" y="2.5" width="4" height="4" fill="#fcefc8"/><rect x="7.5" y="7.5" width="4" height="4" fill="#fcefc8"/>
<path d="M7 0.5 V13.5 M0.5 7 H13.5" stroke="#7a4a2a" stroke-width="1"/>
</svg>
<div class="tt" style="left:65px;top:757px">secneo.apkwrapper</div>
<div class="a" style="left:546px;top:99px;width:3px;height:949px;background:#f0f0f0"></div>
<div class="a" style="left:549px;top:99px;width:1367px;height:1px;background:#646464"></div>
<div class="a" style="left:549px;top:99px;width:1px;height:947px;background:#646464"></div>
<div class="a" style="left:550px;top:100px;width:1366px;height:28px;background:#f0f0f0"></div>
<div class="a" style="left:550px;top:100px;width:1366px;height:3px;background:#f8f8f8"></div>
<div class="a" style="left:1917px;top:96px;width:1px;height:954px;background:#e0e0e0"></div>
<div class="a" style="left:1918px;top:96px;width:2px;height:954px;background:#f0f0f0"></div>
<div class="a" style="left:552px;top:103px;width:130px;height:26px;background:#f0f0f0;border:1px solid #dcdcdc;box-sizing:border-box"></div>
<svg style="left:559px;top:108px" width="16" height="16" viewBox="0 0 16 16">
<path d="M2.5 2.5 H9 L12.5 6 V15.5 H2.5 Z" fill="#f2f6fd" stroke="#a8883a" stroke-width="1"/>
<path d="M9 2.5 V6 H12.5" fill="#f3d78a" stroke="#d0a040" stroke-width="0.8"/>
<path d="M4 1 V5.6 Q4 7.4 2.2 7.4 H1.2" fill="none" stroke="#2a64a8" stroke-width="1.7"/>
<ellipse cx="5.4" cy="11.6" rx="1.1" ry="2.1" fill="none" stroke="#13286a" stroke-width="1.3"/>
<path d="M9.4 9.3 V14" stroke="#13286a" stroke-width="1.4"/>
<ellipse cx="13.5" cy="11.6" rx="1.1" ry="2.1" fill="none" stroke="#13286a" stroke-width="1.3"/>
</svg>
<div class="tt" style="left:578px;top:108px">Analyzer.class</div>
<svg style="left:665px;top:110px" width="11" height="11" viewBox="0 0 11 11">
<path d="M0.5 0.5 H3 L5.5 3 L8 0.5 H10.5 V3 L8 5.5 L10.5 8 V10.5 H8 L5.5 8 L3 10.5 H0.5 V8 L3 5.5 L0.5 3 Z" fill="#fff" stroke="#6a6a5e" stroke-width="1" stroke-linejoin="round"/>
</svg>
<div class="a" style="left:682px;top:103px;width:209px;height:26px;background:#f0f0f0;border:1px solid #dcdcdc;box-sizing:border-box"></div>
<svg style="left:689px;top:108px" width="16" height="16" viewBox="0 0 16 16">
<path d="M2.5 2.5 H9 L12.5 6 V15.5 H2.5 Z" fill="#f2f6fd" stroke="#a8883a" stroke-width="1"/>
<path d="M9 2.5 V6 H12.5" fill="#f3d78a" stroke="#d0a040" stroke-width="0.8"/>
<path d="M4 1 V5.6 Q4 7.4 2.2 7.4 H1.2" fill="none" stroke="#2a64a8" stroke-width="1.7"/>
<ellipse cx="5.4" cy="11.6" rx="1.1" ry="2.1" fill="none" stroke="#13286a" stroke-width="1.3"/>
<path d="M9.4 9.3 V14" stroke="#13286a" stroke-width="1.4"/>
<ellipse cx="13.5" cy="11.6" rx="1.1" ry="2.1" fill="none" stroke="#13286a" stroke-width="1.3"/>
</svg>
<div class="tt" style="left:708px;top:108px">ConstraintTableLayout.class</div>
<svg style="left:873px;top:110px" width="11" height="11" viewBox="0 0 11 11">
<path d="M0.5 0.5 H3 L5.5 3 L8 0.5 H10.5 V3 L8 5.5 L10.5 8 V10.5 H8 L5.5 8 L3 10.5 H0.5 V8 L3 5.5 L0.5 3 Z" fill="#fff" stroke="#6a6a5e" stroke-width="1" stroke-linejoin="round"/>
</svg>
<div class="a" style="left:891px;top:103px;width:155px;height:26px;background:#f0f0f0;border:1px solid #dcdcdc;box-sizing:border-box"></div>
<svg style="left:898px;top:108px" width="16" height="16" viewBox="0 0 16 16">
<path d="M2.5 2.5 H9 L12.5 6 V15.5 H2.5 Z" fill="#f2f6fd" stroke="#a8883a" stroke-width="1"/>
<path d="M9 2.5 V6 H12.5" fill="#f3d78a" stroke="#d0a040" stroke-width="0.8"/>
<path d="M4 1 V5.6 Q4 7.4 2.2 7.4 H1.2" fill="none" stroke="#2a64a8" stroke-width="1.7"/>
<ellipse cx="5.4" cy="11.6" rx="1.1" ry="2.1" fill="none" stroke="#13286a" stroke-width="1.3"/>
<path d="M9.4 9.3 V14" stroke="#13286a" stroke-width="1.4"/>
<ellipse cx="13.5" cy="11.6" rx="1.1" ry="2.1" fill="none" stroke="#13286a" stroke-width="1.3"/>
</svg>
<div class="tt" style="left:917px;top:108px">CameraFacing.class</div>
<svg style="left:1028px;top:110px" width="11" height="11" viewBox="0 0 11 11">
<path d="M0.5 0.5 H3 L5.5 3 L8 0.5 H10.5 V3 L8 5.5 L10.5 8 V10.5 H8 L5.5 8 L3 10.5 H0.5 V8 L3 5.5 L0.5 3 Z" fill="#fff" stroke="#6a6a5e" stroke-width="1" stroke-linejoin="round"/>
</svg>
<div class="a" style="left:1046px;top:101px;width:126px;height:29px;background:#fff;border-right:1px solid #d4d4d4;border-top:1px solid #dcdcdc;box-sizing:border-box"></div>
<svg style="left:1053px;top:106px" width="16" height="16" viewBox="0 0 16 16">
<path d="M2.5 2.5 H9 L12.5 6 V15.5 H2.5 Z" fill="#f2f6fd" stroke="#a8883a" stroke-width="1"/>
<path d="M9 2.5 V6 H12.5" fill="#f3d78a" stroke="#d0a040" stroke-width="0.8"/>
<path d="M4 1 V5.6 Q4 7.4 2.2 7.4 H1.2" fill="none" stroke="#2a64a8" stroke-width="1.7"/>
<ellipse cx="5.4" cy="11.6" rx="1.1" ry="2.1" fill="none" stroke="#13286a" stroke-width="1.3"/>
<path d="M9.4 9.3 V14" stroke="#13286a" stroke-width="1.4"/>
<ellipse cx="13.5" cy="11.6" rx="1.1" ry="2.1" fill="none" stroke="#13286a" stroke-width="1.3"/>
</svg>
<div class="tt" style="left:1072px;top:106px">Barrier.class</div>
<svg style="left:1153px;top:109px" width="11" height="11" viewBox="0 0 11 11">
<path d="M0.5 0.5 H3 L5.5 3 L8 0.5 H10.5 V3 L8 5.5 L10.5 8 V10.5 H8 L5.5 8 L3 10.5 H0.5 V8 L3 5.5 L0.5 3 Z" fill="#fff" stroke="#6a6a5e" stroke-width="1" stroke-linejoin="round"/>
</svg>
<div class="a" style="left:552px;top:128px;width:1362px;height:917px;background:#fff;border:1px solid #dcdcdc;border-top:none;box-sizing:border-box"></div>
<div class="a" style="left:552px;top:128px;width:494px;height:1px;background:#dcdcdc"></div>
<div class="a" style="left:1172px;top:128px;width:742px;height:1px;background:#dcdcdc"></div>
<div class="a" style="left:1171px;top:128px;width:1px;height:3px;background:#d4d4d4"></div>
<div class="a" style="left:552px;top:132px;width:1347px;height:911px;background:#fff;border:1px solid #7a818a;box-sizing:border-box"></div>
<div class="a" style="left:1899px;top:133px;width:14px;height:911px;background:#f0f0f0"></div>
<div class="a" style="left:1902px;top:206px;width:9px;height:4px;background:#f39c12;border:1px solid #c07010;box-sizing:border-box"></div>
<div class="a" style="left:1899px;top:241px;width:14px;height:1px;background:#8ab8f0"></div>
<div class="a" style="left:565px;top:133px;width:1px;height:909px;background:#e0e0e0"></div>
<div class="a" style="left:566px;top:356px;width:1316px;height:17px;background:#e8f2fe"></div>
<div class="a" style="left:1882px;top:133px;width:16px;height:909px;background:#f0f0f0"></div>
<div class="a" style="left:1882px;top:150px;width:15px;height:424px;background:#cdcdcd"></div>
<svg style="left:1882px;top:133px" width="16" height="17"><path d="M4.5 11 L8 7.5 L11.5 11" stroke="#606060" stroke-width="2" fill="none"/></svg>
<svg style="left:1882px;top:1025px" width="16" height="17"><path d="M4.5 7 L8 10.5 L11.5 7" stroke="#606060" stroke-width="2" fill="none"/></svg>
<div class="a" style="left:672px;top:288px;width:56px;height:17px;background:#f39c12"></div>
<div class="a" style="left:553px;top:133px;width:1329px;height:909px;overflow:hidden">
<div class="cd" style="left:15px;top:2px"><span class="k">package</span> android.support.constraint;</div>
<div class="cd" style="left:15px;top:19px"></div>
<div class="cd" style="left:15px;top:36px"><span class="k">import</span> android.content.Context;</div>
<div class="cd" style="left:15px;top:53px"><span class="k">import</span> android.content.res.TypedArray;</div>
<div class="cd" style="left:15px;top:70px"><span class="k">import</span> android.os.Build;</div>
<div class="cd" style="left:15px;top:87px"><span class="k">import</span> <span class="u">android.support.constraint.solver.widgets.Barrier</span>;</div>
<div class="cd" style="left:15px;top:104px"><span class="k">import</span> <span class="u">android.support.constraint.solver.widgets.Helper</span>;</div>
<div class="cd" style="left:15px;top:121px"><span class="k">import</span> android.util.AttributeSet;</div>
<div class="cd" style="left:15px;top:138px"></div>
<div class="cd" style="left:15px;top:155px"><span class="k">public</span> <span class="k">class</span> <span class="hl">Barrier</span> <span class="k">extends</span> <span class="u">ConstraintHelper</span> {</div>
<div class="cd" style="left:15px;top:172px">  <span class="k">public</span> <span class="k">static</span> <span class="k">final</span> <span class="k">int</span> BOTTOM = 3;</div>
<div class="cd" style="left:15px;top:189px"></div>
<div class="cd" style="left:15px;top:206px">  <span class="k">public</span> <span class="k">static</span> <span class="k">final</span> <span class="k">int</span> END = 6;</div>
<div class="cd" style="left:15px;top:223px"></div>
<div class="cd" style="left:15px;top:240px">  <span class="k">public</span> <span class="k">static</span> <span class="k">final</span> <span class="k">int</span> LEFT = 0;</div>
<div class="cd" style="left:15px;top:257px"></div>
<div class="cd" style="left:15px;top:274px">  <span class="k">public</span> <span class="k">static</span> <span class="k">final</span> <span class="k">int</span> RIGHT = 1;</div>
<div class="cd" style="left:15px;top:291px"></div>
<div class="cd" style="left:15px;top:308px">  <span class="k">public</span> <span class="k">static</span> <span class="k">final</span> <span class="k">int</span> START = 5;</div>
<div class="cd" style="left:15px;top:325px"></div>
<div class="cd" style="left:15px;top:342px">  <span class="k">public</span> <span class="k">static</span> <span class="k">final</span> <span class="k">int</span> TOP = 2;</div>
<div class="cd" style="left:15px;top:359px"></div>
<div class="cd" style="left:15px;top:376px">  <span class="k">public</span> <span class="u">Barrier</span> mBarrier;</div>
<div class="cd" style="left:15px;top:393px"></div>
<div class="cd" style="left:15px;top:410px">  <span class="k">public</span> <span class="k">int</span> mIndicatedType;</div>
<div class="cd" style="left:15px;top:427px"></div>
<div class="cd" style="left:15px;top:444px">  <span class="k">public</span> <span class="k">int</span> mResolvedType;</div>
<div class="cd" style="left:15px;top:461px"></div>
<div class="cd" style="left:15px;top:478px">  <span class="k">public</span> Barrier(Context paramContext) {</div>
<div class="cd" style="left:15px;top:495px">    <span class="k">super</span>(paramContext);</div>
<div class="cd" style="left:15px;top:512px">    setVisibility(8);</div>
<div class="cd" style="left:15px;top:529px">  }</div>
<div class="cd" style="left:15px;top:546px"></div>
<div class="cd" style="left:15px;top:563px">  <span class="k">public</span> Barrier(Context paramContext, AttributeSet paramAttributeSet) {</div>
<div class="cd" style="left:15px;top:580px">    <span class="k">super</span>(paramContext, paramAttributeSet);</div>
<div class="cd" style="left:15px;top:597px">    setVisibility(8);</div>
<div class="cd" style="left:15px;top:614px">  }</div>
<div class="cd" style="left:15px;top:631px"></div>
<div class="cd" style="left:15px;top:648px">  <span class="k">public</span> Barrier(Context paramContext, AttributeSet paramAttributeSet, <span class="k">int</span> paramInt) {</div>
<div class="cd" style="left:15px;top:665px">    <span class="k">super</span>(paramContext, paramAttributeSet, paramInt);</div>
<div class="cd" style="left:15px;top:682px">    setVisibility(8);</div>
<div class="cd" style="left:15px;top:699px">  }</div>
<div class="cd" style="left:15px;top:716px"></div>
<div class="cd" style="left:15px;top:733px">  <span class="k">public</span> <span class="k">boolean</span> allowsGoneWidget() {</div>
<div class="cd" style="left:15px;top:750px">    <span class="k">return</span> <span class="k">this</span>.<span class="u">mBarrier</span>.<span class="u">allowsGoneWidget</span>();</div>
<div class="cd" style="left:15px;top:767px">  }</div>
<div class="cd" style="left:15px;top:784px"></div>
<div class="cd" style="left:15px;top:801px">  <span class="k">public</span> <span class="k">int</span> getType() {</div>
<div class="cd" style="left:15px;top:818px">    <span class="k">return</span> <span class="k">this</span>.<span class="u">mIndicatedType</span>;</div>
<div class="cd" style="left:15px;top:835px">  }</div>
<div class="cd" style="left:15px;top:852px"></div>
<div class="cd" style="left:15px;top:869px">  <span class="k">public</span> <span class="k">void</span> init(AttributeSet paramAttributeSet) {</div>
<div class="cd" style="left:15px;top:886px">    <span class="k">super</span>.<span class="u">init</span>(paramAttributeSet);</div>
<div class="cd" style="left:15px;top:903px">    <span class="k">this</span>.<span class="u">mBarrier</span> = <span class="k">new</span> <span class="u">Barrier</span>();</div>
<svg style="left:1px;top:39px" width="11" height="11" viewBox="0 0 11 11"><circle cx="5.5" cy="5.5" r="4.5" fill="#dfe8f4" stroke="#8aa0b8" stroke-width="1"/><path d="M3 5.5 H8" stroke="#1a2a4a" stroke-width="1.2"/></svg>
<svg style="left:1px;top:158px" width="11" height="11" viewBox="0 0 11 11"><circle cx="5.5" cy="5.5" r="4.5" fill="#dfe8f4" stroke="#8aa0b8" stroke-width="1"/><path d="M3 5.5 H8" stroke="#1a2a4a" stroke-width="1.2"/></svg>
<svg style="left:1px;top:481px" width="11" height="11" viewBox="0 0 11 11"><circle cx="5.5" cy="5.5" r="4.5" fill="#dfe8f4" stroke="#8aa0b8" stroke-width="1"/><path d="M3 5.5 H8" stroke="#1a2a4a" stroke-width="1.2"/></svg>
<svg style="left:1px;top:566px" width="11" height="11" viewBox="0 0 11 11"><circle cx="5.5" cy="5.5" r="4.5" fill="#dfe8f4" stroke="#8aa0b8" stroke-width="1"/><path d="M3 5.5 H8" stroke="#1a2a4a" stroke-width="1.2"/></svg>
<svg style="left:1px;top:651px" width="11" height="11" viewBox="0 0 11 11"><circle cx="5.5" cy="5.5" r="4.5" fill="#dfe8f4" stroke="#8aa0b8" stroke-width="1"/><path d="M3 5.5 H8" stroke="#1a2a4a" stroke-width="1.2"/></svg>
<svg style="left:1px;top:736px" width="11" height="11" viewBox="0 0 11 11"><circle cx="5.5" cy="5.5" r="4.5" fill="#dfe8f4" stroke="#8aa0b8" stroke-width="1"/><path d="M3 5.5 H8" stroke="#1a2a4a" stroke-width="1.2"/></svg>
<svg style="left:1px;top:804px" width="11" height="11" viewBox="0 0 11 11"><circle cx="5.5" cy="5.5" r="4.5" fill="#dfe8f4" stroke="#8aa0b8" stroke-width="1"/><path d="M3 5.5 H8" stroke="#1a2a4a" stroke-width="1.2"/></svg>
<svg style="left:1px;top:872px" width="11" height="11" viewBox="0 0 11 11"><circle cx="5.5" cy="5.5" r="4.5" fill="#dfe8f4" stroke="#8aa0b8" stroke-width="1"/><path d="M3 5.5 H8" stroke="#1a2a4a" stroke-width="1.2"/></svg>
</div>
<div class="a" style="left:0;top:1050px;width:1920px;height:1px;background:#333"></div>
<div class="a" style="left:482px;top:1050px;width:36px;height:1px;background:#777"></div>
<div class="a" style="left:0;top:1048px;width:1920px;height:1px;background:#e4e4e4"></div>
</body></html>
